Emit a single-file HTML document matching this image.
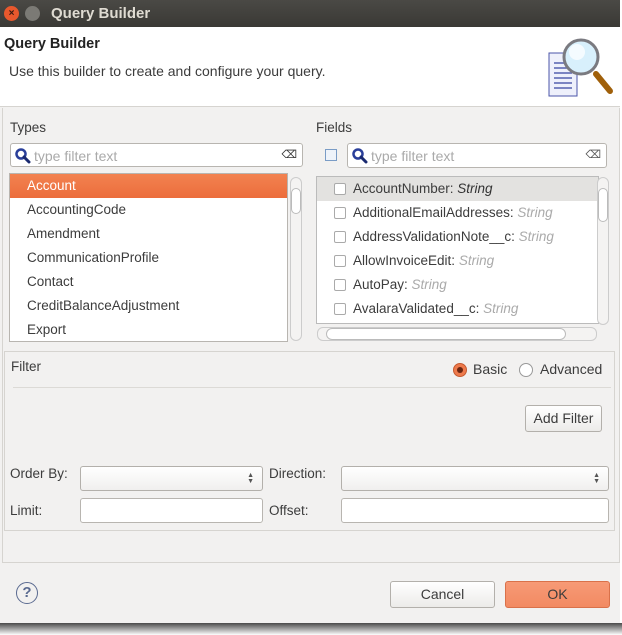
<!DOCTYPE html>
<html><head><style>
*{box-sizing:border-box;margin:0;padding:0}
body{width:622px;height:635px;background:#fff;font-family:"Liberation Sans",sans-serif;font-size:13.5px;color:#3c3c3c;position:relative;overflow:hidden}
.a{position:absolute}
.win{left:0;top:0;width:620px;height:623px;background:#f2f1f0}
.tb{left:0;top:0;width:620px;height:27px;background:linear-gradient(#4a4945,#3a3935);color:#dfdbd2;font-weight:bold;font-size:15px}
.inp{background:#fff;border:1px solid #b8b5b0;border-radius:3px}
.row{height:24px;line-height:24px;padding-left:17px;white-space:nowrap}
.frow{height:24px;line-height:24px;padding-left:36px;position:relative;white-space:nowrap}
.frow i{color:#aaa}
.cb{position:absolute;left:17px;top:6px;width:12px;height:12px;border:1px solid #aaa;border-radius:2px;background:#fff}
.vs{width:12px;border:1px solid #ccc;border-radius:6px;background:#f4f3f2}
.btn{border:1px solid #b3b0ab;border-radius:3px;background:linear-gradient(#fff,#ecebe9);text-align:center;line-height:25px;font-size:14px}
.combo{background:linear-gradient(#fff,#f0efee);border:1px solid #b3b0ab;border-radius:3px}
.arr{position:absolute;right:8px;top:6px;font-size:7px;line-height:6px;color:#555}
.mag{position:absolute;left:4px;top:4px}
</style></head><body>
<div class="a" style="left:0;top:623px;width:622px;height:12px;background:linear-gradient(#4a4a4a,#fff)"></div>
<div class="a win"></div>
<div class="a tb"><div class="a" style="left:4px;top:6px;width:15px;height:15px;border-radius:50%;background:#e8582d;color:#3a1a10;font-size:10px;line-height:15px;text-align:center">×</div>
<div class="a" style="left:25px;top:6px;width:15px;height:15px;border-radius:50%;background:#7b7a75"></div>
<div class="a" style="left:51px;top:5px">Query Builder</div></div>
<div class="a" style="left:0;top:27px;width:620px;height:80px;background:#fff;border-bottom:1px solid #d6d4d0"></div>
<div class="a" style="left:4px;top:36px;font-weight:bold;font-size:14.5px;color:#222">Query Builder</div>
<div class="a" style="left:9px;top:63px;font-size:14px">Use this builder to create and configure your query.</div>
<svg class="a" style="left:546px;top:36px" width="70" height="64" viewBox="0 0 70 64">
<rect x="3" y="17" width="28" height="43" fill="#eef0fb" stroke="#4b55a8"/>
<g stroke="#5560b0" stroke-width="1.5"><line x1="8" y1="27" x2="26" y2="27"/><line x1="8" y1="32" x2="26" y2="32"/><line x1="8" y1="37" x2="26" y2="37"/><line x1="8" y1="42" x2="26" y2="42"/><line x1="8" y1="47" x2="26" y2="47"/><line x1="8" y1="52" x2="26" y2="52"/></g>
<line x1="50" y1="38" x2="64" y2="55" stroke="#a0600a" stroke-width="6" stroke-linecap="round"/>
<circle cx="35" cy="21" r="17" fill="#d8f0fc" stroke="#7a7a80" stroke-width="3"/>
<circle cx="31" cy="16" r="8" fill="#f4fbff"/>
</svg>
<div class="a" style="left:2px;top:108px;width:618px;height:455px;border:1px solid #d6d4d0;border-top:none"></div>
<div class="a" style="left:10px;top:120px">Types</div>
<div class="a inp" style="left:10px;top:143px;width:293px;height:24px"><svg class="mag" width="16" height="16" viewBox="0 0 16 16"><circle cx="6" cy="6" r="4.5" fill="#fff" stroke="#2a3f9a" stroke-width="2.5"/><line x1="9" y1="9" x2="14" y2="14" stroke="#1a2a70" stroke-width="3" stroke-linecap="round"/></svg><span class="a" style="left:23px;top:4px;color:#aaa;font-size:14px">type filter text</span><span class="a" style="right:5px;top:4px;font-size:11px;color:#333">⌫</span></div>
<div class="a inp" style="left:9px;top:173px;width:279px;height:169px;border-radius:0;overflow:hidden">
<div class="row" style="background:linear-gradient(#f28250,#ec6d3c);color:#fff">Account</div>
<div class="row">AccountingCode</div><div class="row">Amendment</div><div class="row">CommunicationProfile</div><div class="row">Contact</div><div class="row">CreditBalanceAdjustment</div><div class="row">Export</div></div>
<div class="a vs" style="left:290px;top:177px;height:164px"><div class="a" style="left:0;top:10px;width:10px;height:26px;border:1px solid #bbb;border-radius:5px;background:#fff"></div></div>
<div class="a" style="left:316px;top:120px">Fields</div>
<div class="a" style="left:325px;top:149px;width:12px;height:12px;border:1px solid #7a9cc6;background:#eef3fa"></div>
<div class="a inp" style="left:347px;top:143px;width:260px;height:25px"><svg class="mag" width="16" height="16" viewBox="0 0 16 16"><circle cx="6" cy="6" r="4.5" fill="#fff" stroke="#2a3f9a" stroke-width="2.5"/><line x1="9" y1="9" x2="14" y2="14" stroke="#1a2a70" stroke-width="3" stroke-linecap="round"/></svg><span class="a" style="left:23px;top:4px;color:#aaa;font-size:14px">type filter text</span><span class="a" style="right:5px;top:4px;font-size:11px;color:#555">⌫</span></div>
<div class="a inp" style="left:316px;top:176px;width:283px;height:148px;border-radius:0;border-color:#bbb;overflow:hidden">
<div class="frow" style="background:#e3e2e0"><span class="cb"></span>AccountNumber: <i style="color:#333">String</i></div>
<div class="frow"><span class="cb"></span>AdditionalEmailAddresses: <i>String</i></div>
<div class="frow"><span class="cb"></span>AddressValidationNote__c: <i>String</i></div>
<div class="frow"><span class="cb"></span>AllowInvoiceEdit: <i>String</i></div>
<div class="frow"><span class="cb"></span>AutoPay: <i>String</i></div>
<div class="frow"><span class="cb"></span>AvalaraValidated__c: <i>String</i></div></div>
<div class="a vs" style="left:597px;top:177px;height:148px"><div class="a" style="left:0;top:10px;width:10px;height:34px;border:1px solid #bbb;border-radius:5px;background:#fff"></div></div>
<div class="a vs" style="left:317px;top:327px;width:280px;height:14px"><div class="a" style="left:8px;top:0;width:240px;height:12px;border:1px solid #bbb;border-radius:6px;background:#fff"></div></div>
<div class="a" style="left:4px;top:351px;width:611px;height:180px;border:1px solid #d6d4d0"></div>
<div class="a" style="left:11px;top:359px">Filter</div>
<div class="a" style="left:453px;top:363px;width:14px;height:14px;border-radius:50%;background:#ee7a4c;border:1px solid #c55a30"><span class="a" style="left:3px;top:3px;width:6px;height:6px;border-radius:50%;background:#6a2510"></span></div>
<div class="a" style="left:473px;top:361px;font-size:14px">Basic</div>
<div class="a" style="left:519px;top:363px;width:14px;height:14px;border-radius:50%;background:#fff;border:1px solid #999"></div>
<div class="a" style="left:540px;top:361px;font-size:14px">Advanced</div>
<div class="a" style="left:13px;top:387px;width:598px;height:1px;background:#dcdad6"></div>
<div class="a btn" style="left:525px;top:405px;width:77px;height:27px">Add Filter</div>
<div class="a" style="left:10px;top:466px">Order By:</div>
<div class="a combo" style="left:80px;top:466px;width:183px;height:25px"><div class="arr">▲<br>▼</div></div>
<div class="a" style="left:269px;top:466px">Direction:</div>
<div class="a combo" style="left:341px;top:466px;width:268px;height:25px"><div class="arr">▲<br>▼</div></div>
<div class="a" style="left:10px;top:503px">Limit:</div>
<div class="a inp" style="left:80px;top:498px;width:183px;height:25px"></div>
<div class="a" style="left:269px;top:503px">Offset:</div>
<div class="a inp" style="left:341px;top:498px;width:268px;height:25px"></div>
<div class="a" style="left:16px;top:582px;width:22px;height:22px;border-radius:50%;border:1.5px solid #5a6a90;color:#5a6a90;font-weight:bold;text-align:center;line-height:19px;font-size:15px">?</div>
<div class="a btn" style="left:390px;top:581px;width:105px;height:27px">Cancel</div>
<div class="a btn" style="left:505px;top:581px;width:105px;height:27px;background:linear-gradient(#f79a76,#f28a62);border-color:#d9714a">OK</div>
</body></html>
